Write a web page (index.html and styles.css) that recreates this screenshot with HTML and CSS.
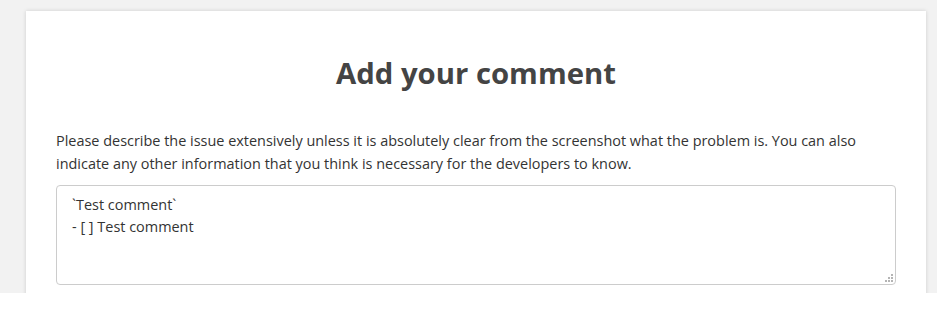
FILE: index.html
```html
<!DOCTYPE html>
<html lang="en">
<head>
<meta charset="utf-8">
<title>Add your comment</title>
<link rel="stylesheet" href="styles.css">
</head>
<body>
<div class="stage">
  <section class="card">
    <h1 class="title">Add your comment</h1>
    <p class="intro">Please describe the issue extensively unless it is absolutely clear from the screenshot what the problem is. You can also indicate any other information that you think is necessary for the developers to know.</p>
    <div class="field">
      <textarea class="comment">`Test comment`
- [ ] Test comment</textarea>
      <svg class="grip" width="8" height="8" viewBox="0 0 8 8" aria-hidden="true">
        <rect x="6" y="0" width="2" height="2"/>
        <rect x="3" y="3" width="2" height="2"/>
        <rect x="6" y="3" width="2" height="2"/>
        <rect x="0" y="6" width="2" height="2"/>
        <rect x="3" y="6" width="2" height="2"/>
        <rect x="6" y="6" width="2" height="2"/>
      </svg>
    </div>
  </section>
</div>
</body>
</html>
```
FILE: styles.css
```css
html, body {
  margin: 0;
  padding: 0;
  background: #ffffff;
}
.stage {
  height: 293px;
  box-sizing: border-box;
  overflow: hidden;
  background: #f2f2f2;
  padding: 11px 11px 0 26px;
}
.card {
  width: 900px;
  box-sizing: border-box;
  background: #ffffff;
  box-shadow: 0 0 4px rgba(0, 0, 0, 0.15);
  padding: 42px 30px 30px;
  font-family: "Open Sans", "Noto Sans", sans-serif;
  color: #333333;
}
.title {
  margin: 0 0 36px;
  text-align: center;
  font-size: 29.3px;
  line-height: 40px;
  font-weight: 700;
  color: #444444;
}
.intro {
  margin: 0 0 10px;
  font-size: 14.45px;
  line-height: 23px;
}
.field {
  position: relative;
}
.comment {
  display: block;
  width: 100%;
  height: 100px;
  box-sizing: border-box;
  margin: 0;
  padding: 8px 15px;
  border: 1px solid #cccccc;
  border-radius: 4px;
  font-family: "Open Sans", "Noto Sans", sans-serif;
  font-size: 14.45px;
  line-height: 22px;
  color: #333333;
  resize: none;
  outline: none;
}
.grip {
  position: absolute;
  right: 3px;
  bottom: 3px;
  fill: #b4b4b4;
}
```
